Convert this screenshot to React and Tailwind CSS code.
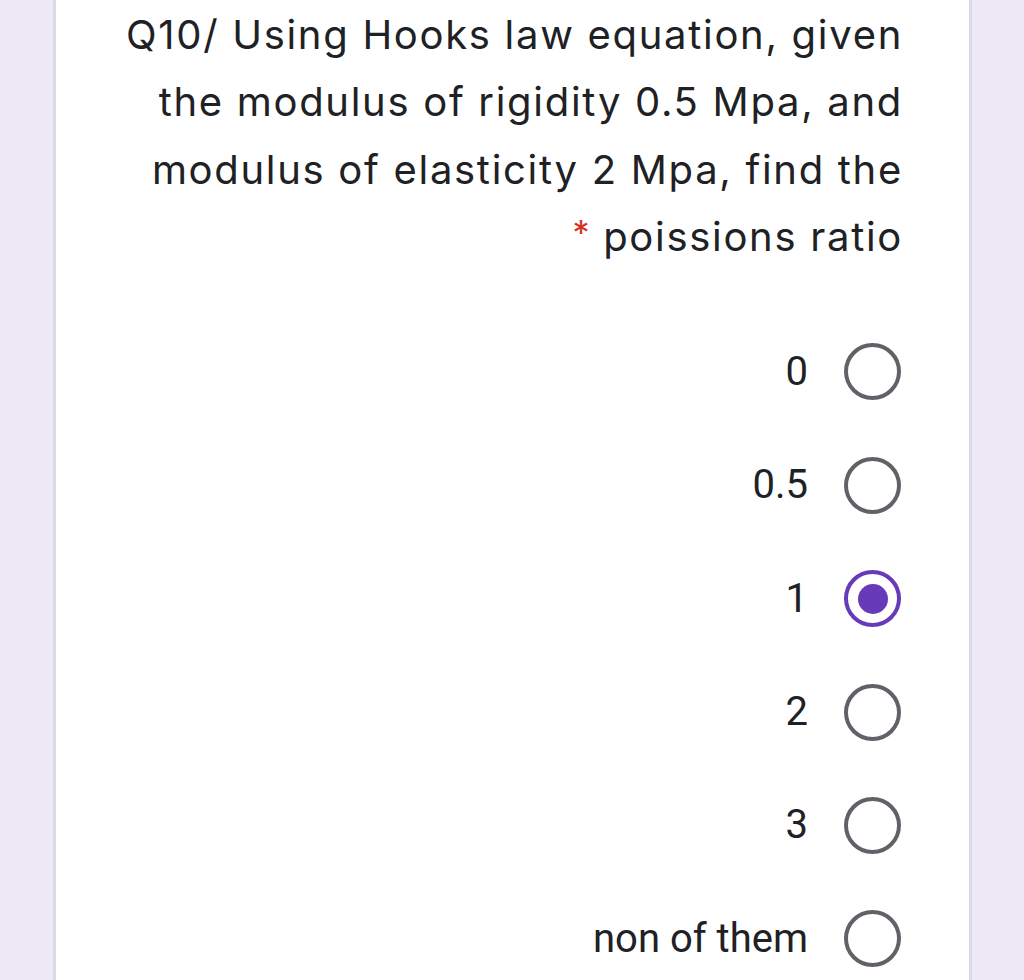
import React, { useState } from "react";

const options = ["0", "0.5", "1", "2", "3", "non of them"];

const Radio = ({ checked }) => (
  <div
    className={`w-[57px] h-[57px] rounded-full border-[4px] flex items-center justify-center shrink-0 ${
      checked ? "border-[#673ab7]" : "border-[#5f6368]"
    }`}
  >
    {checked && <div className="w-[30px] h-[30px] rounded-full bg-[#673ab7]" />}
  </div>
);

export default function App() {
  const [selected, setSelected] = useState("1");

  return (
    <div className="min-h-[980px] bg-[#ede9f7] flex justify-center">
      <div className="w-[919px] ml-[1px] bg-white border-x-[3px] border-[#dcdae2] min-h-[980px] pr-[68px]">
        <div
          className="pt-[1px] mr-[-2px] text-right text-[#202124] text-[40px] leading-[67.3px] tracking-[1.7px]"
          style={{ fontFamily: 'Inter, "Open Sans", sans-serif' }}
        >
          Q10/ Using Hooks law equation, given
          <br />
          the modulus of rigidity 0.5 Mpa, and
          <br />
          modulus of elasticity 2 Mpa, find the
          <br />
          <span className="text-[#d93025] text-[34px] align-top relative top-[-4px] mr-[12px]">*</span>
          poissions ratio
        </div>

        <div
          className="mt-[45px] flex flex-col"
          style={{ fontFamily: 'Roboto, "Liberation Sans", sans-serif' }}
        >
          {options.map((opt) => (
            <label
              key={opt}
              onClick={() => setSelected(opt)}
              className="h-[113.4px] flex items-center justify-end gap-[36px] cursor-pointer"
            >
              <span className="text-[40px] text-[#202124]">{opt}</span>
              <Radio checked={selected === opt} />
            </label>
          ))}
        </div>
      </div>
    </div>
  );
}
